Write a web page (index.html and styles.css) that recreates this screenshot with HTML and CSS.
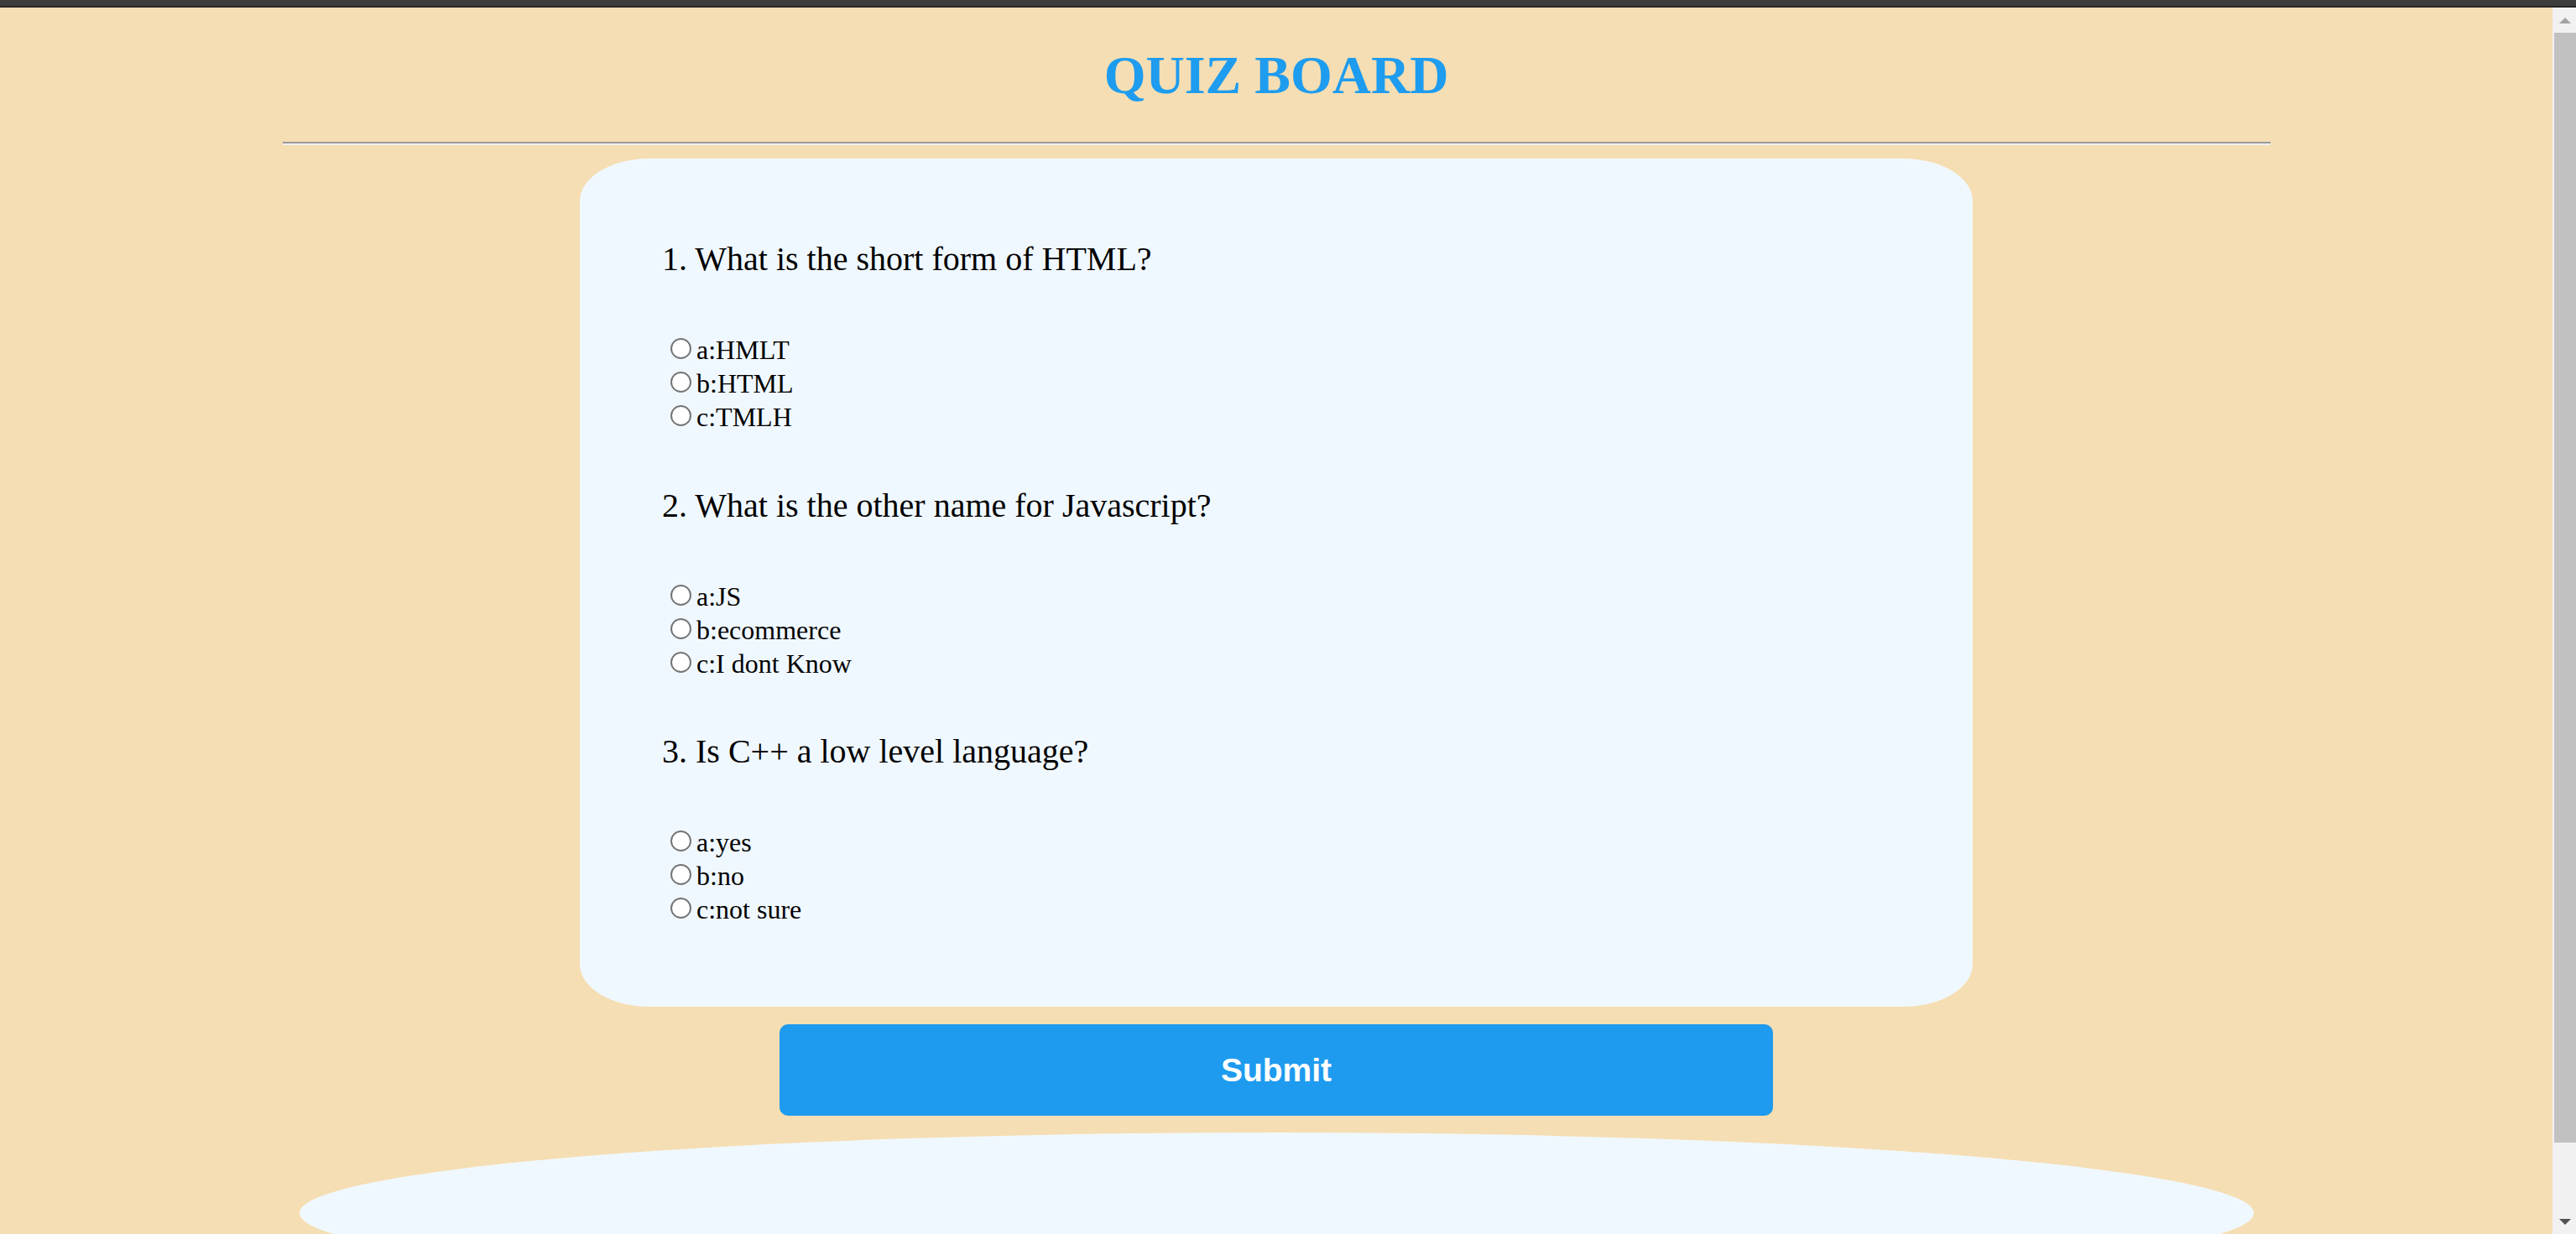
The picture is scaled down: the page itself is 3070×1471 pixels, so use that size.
FILE: index.html
```html
<!DOCTYPE html>
<html lang="en">
<head>
<meta charset="utf-8">
<title>Quiz Board</title>
<link rel="stylesheet" href="styles.css">
</head>
<body>
<div class="topbar"></div>
<div class="window">
  <main class="page">
    <h1 class="title">QUIZ BOARD</h1>
    <hr class="rule">
    <form class="card">
      <div class="question">
        <p class="q-text">1. What is the short form of HTML?</p>
        <div class="options">
          <label class="opt"><input type="radio" name="q1" class="radio">a:HMLT</label>
          <label class="opt"><input type="radio" name="q1" class="radio">b:HTML</label>
          <label class="opt"><input type="radio" name="q1" class="radio">c:TMLH</label>
        </div>
      </div>
      <div class="question">
        <p class="q-text">2. What is the other name for Javascript?</p>
        <div class="options">
          <label class="opt"><input type="radio" name="q2" class="radio">a:JS</label>
          <label class="opt"><input type="radio" name="q2" class="radio">b:ecommerce</label>
          <label class="opt"><input type="radio" name="q2" class="radio">c:I dont Know</label>
        </div>
      </div>
      <div class="question">
        <p class="q-text">3. Is C++ a low level language?</p>
        <div class="options">
          <label class="opt"><input type="radio" name="q3" class="radio">a:yes</label>
          <label class="opt"><input type="radio" name="q3" class="radio">b:no</label>
          <label class="opt"><input type="radio" name="q3" class="radio">c:not sure</label>
        </div>
      </div>
    </form>
    <button class="submit" type="button">Submit</button>
    <div class="result"></div>
  </main>
  <div class="scrollbar">
    <div class="sb-btn"><span class="arrow-up"></span></div>
    <div class="sb-track"><div class="sb-thumb"></div></div>
    <div class="sb-btn"><span class="arrow-down"></span></div>
  </div>
</div>
</body>
</html>
```
FILE: styles.css
```css
* { box-sizing: border-box; }
html, body {
  margin: 0;
  padding: 0;
  height: 100%;
  overflow: hidden;
}
body {
  font-family: "Liberation Serif", "Times New Roman", serif;
  color: #000;
  background: #f5deb3;
  display: flex;
  flex-direction: column;
}
.topbar {
  height: 9px;
  background: #3d3d3d;
  border-bottom: 2px solid #262626;
  flex: none;
}
.window {
  flex: 1;
  display: flex;
  min-height: 0;
}
.page {
  flex: 1;
  min-width: 0;
  overflow: hidden;
  background: #f5deb3;
  display: flex;
  flex-direction: column;
  align-items: center;
}
.title {
  margin: 45px 0 0;
  font-family: "Liberation Serif", "Times New Roman", serif;
  font-weight: bold;
  font-size: 64px;
  line-height: 72px;
  color: #1e9cef;
  text-align: center;
}
.rule {
  width: 2369px;
  height: 0;
  margin: 43px 0 0;
  border: 0;
  border-top: 2px solid #9a9a9a;
  border-bottom: 2px solid #efefef;
}
.card {
  width: 1660px;
  margin: 16px 0 0;
  padding: 97px 98px 96px;
  background: #f0f8ff;
  border-radius: 5%;
  flex: none;
}
.question + .question { margin-top: 62.5px; }
.q-text {
  margin: 0;
  font-size: 40px;
  line-height: 45px;
}
.options {
  margin-top: 66px;
  display: flex;
  flex-direction: column;
}
.opt {
  display: block;
  font-size: 32px;
  line-height: 40px;
}
.radio {
  appearance: none;
  -webkit-appearance: none;
  width: 25px;
  height: 25px;
  margin: 0 6px 0 10px;
  border: 2px solid #767676;
  border-radius: 50%;
  background: #fff;
  vertical-align: baseline;
}
.submit {
  width: 1184px;
  height: 109px;
  margin: 21px 0 0;
  border: 0;
  border-radius: 10px;
  background: #1e9bef;
  color: #fff;
  font-family: "Liberation Sans", Arial, sans-serif;
  font-weight: bold;
  font-size: 39px;
  flex: none;
}
.result {
  width: 2329px;
  height: 192px;
  margin-top: 20px;
  border-radius: 50%;
  background: #f0f8ff;
  flex: none;
}
.scrollbar {
  width: 28px;
  flex: none;
  background: #f1f1f1;
  display: flex;
  flex-direction: column;
}
.sb-btn {
  height: 30px;
  flex: none;
  display: flex;
  align-items: center;
  justify-content: center;
  padding-left: 2px;
}
.arrow-up {
  width: 0;
  height: 0;
  border-left: 7px solid transparent;
  border-right: 7px solid transparent;
  border-bottom: 7px solid #a3a3a3;
}
.arrow-down {
  width: 0;
  height: 0;
  border-left: 7px solid transparent;
  border-right: 7px solid transparent;
  border-top: 7px solid #505050;
}
.sb-track {
  flex: 1;
  padding-left: 2px;
}
.sb-thumb {
  height: 1323px;
  background: #c1c1c1;
}
```
